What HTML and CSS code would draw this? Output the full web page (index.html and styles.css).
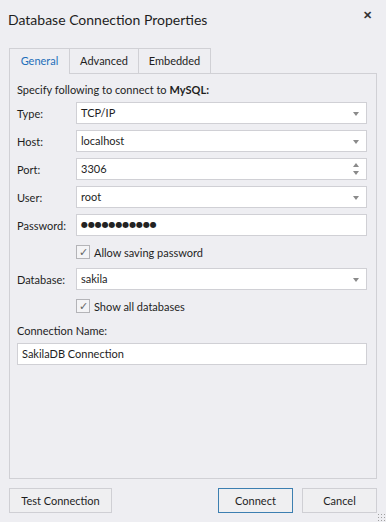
FILE: index.html
```html
<!DOCTYPE html>
<html lang="en">
<head>
    <meta charset="UTF-8" />
    <title>Database Connection Properties</title>
    <link rel="stylesheet" href="styles.css">
</head>
<body>

<div class="dialog">
    <div class="titlebar">
        <span class="title">Database Connection Properties</span>
        <span class="close">✕</span>
    </div>

    <!-- Tabs -->
    <div class="tabs">
        <div class="tab active">General</div>
        <div class="tab adv">Advanced</div>
        <div class="tab emb">Embedded</div>
    </div>

    <div class="panel">
        <div class="intro">Specify following to connect to <b>MySQL:</b></div>

        <div class="form">
            <label>Type:</label>
            <div class="field">TCP/IP<span class="arrow"></span></div>

            <label>Host:</label>
            <div class="field">localhost<span class="arrow"></span></div>

            <label>Port:</label>
            <div class="field">3306<span class="spin"><i class="up"></i><i class="down"></i></span></div>

            <label>User:</label>
            <div class="field">root<span class="arrow"></span></div>

            <label>Password:</label>
            <div class="field dots">●●●●●●●●●●●</div>

            <span></span>
            <div class="check"><span class="box">✓</span>Allow saving password</div>

            <label>Database:</label>
            <div class="field">sakila<span class="arrow"></span></div>

            <span></span>
            <div class="check"><span class="box">✓</span>Show all databases</div>
        </div>

        <div class="name-label">Connection Name:</div>
        <div class="field wide">SakilaDB Connection</div>
    </div>

    <!-- Buttons -->
    <div class="buttons">
        <button>Test Connection</button>
        <span class="spacer"></span>
        <button class="primary">Connect</button>
        <button>Cancel</button>
    </div>
    <div class="grip"></div>
</div>

</body>
</html>
```

FILE: styles.css
```css
body {
    margin: 0;
    background-color: #eeeef2;
    font-family: 'Lato', 'Open Sans', sans-serif;
    font-size: 11px;
    color: #1e1e1e;
}
.dialog {
    position: relative;
    width: 386px;
    height: 522px;
}
.titlebar {
    display: flex;
    justify-content: space-between;
    height: 48px;
    padding: 11px 14px 0 8px;
    box-sizing: border-box;
}
.title {
    font-size: 14px;
    color: #1e1e1e;
}
.close {
    font-size: 11px;
    font-weight: bold;
    color: #333;
    margin-top: -3px;
}
.tabs {
    display: flex;
    padding-left: 9px;
    height: 25px;
}
.tab {
    line-height: 24px;
    border: 1px solid #d0d0d5;
    border-bottom: none;
    color: #1e1e1e;
    margin-left: -1px;
    text-align: center;
    box-sizing: border-box;
}
.tab.active {
    margin-left: 0;
    width: 61px;
    color: #1e6fba;
    background-color: #eeeef2;
    height: 26px;
    position: relative;
    z-index: 1;
}
.tab.adv {
    width: 70px;
}
.tab.emb {
    width: 73px;
}
.panel {
    margin: 0 9px;
    height: 406px;
    border: 1px solid #d0d0d5;
    padding: 8px 9px 0 7px;
    box-sizing: border-box;
}
.intro {
    height: 20px;
    line-height: 16px;
}
.form {
    display: grid;
    grid-template-columns: 59px 1fr;
    row-gap: 6px;
    align-items: center;
}
.field {
    position: relative;
    height: 22px;
    line-height: 20px;
    border: 1px solid #d0d0d5;
    background-color: #fff;
    padding: 0 4px;
    box-sizing: border-box;
}
.arrow {
    position: absolute;
    right: 7px;
    top: 9px;
    border-left: 3.5px solid transparent;
    border-right: 3.5px solid transparent;
    border-top: 4px solid #8a8a8a;
}
.spin i {
    position: absolute;
    right: 7px;
    border-left: 3.5px solid transparent;
    border-right: 3.5px solid transparent;
}
.spin .up {
    top: 4px;
    border-bottom: 4px solid #8a8a8a;
}
.spin .down {
    top: 12px;
    border-top: 4px solid #8a8a8a;
}
.dots {
    font-family: 'DejaVu Sans', sans-serif;
    font-size: 8px;
    letter-spacing: -0.1px;
    color: #222;
}
.check {
    display: flex;
    align-items: center;
    height: 20px;
}
.box {
    width: 12px;
    height: 12px;
    border: 1px solid #b4b4b8;
    background-color: #f4f4f6;
    margin-right: 4px;
    font-size: 11px;
    line-height: 12px;
    text-align: center;
    color: #666;
}
.name-label {
    margin-top: 5px;
    height: 20px;
    line-height: 20px;
}
.wide {
    margin-top: 2px;
}
.buttons {
    display: flex;
    gap: 9px;
    padding: 9px 9px 0 9px;
}
.spacer {
    flex: 1;
}
button {
    font-family: inherit;
    font-size: 11px;
    color: #1e1e1e;
    height: 25px;
    width: 75px;
    background-color: #efeff1;
    border: 1px solid #cfcfd4;
    padding: 0;
}
button:first-child {
    width: 103px;
}
button.primary {
    border-color: #3c7fb1;
}
.grip {
    position: absolute;
    right: 1px;
    bottom: 1px;
    width: 8px;
    height: 8px;
    background-image: radial-gradient(#a0a0a0 0.8px, transparent 1px);
    background-size: 3px 3px;
}
```
